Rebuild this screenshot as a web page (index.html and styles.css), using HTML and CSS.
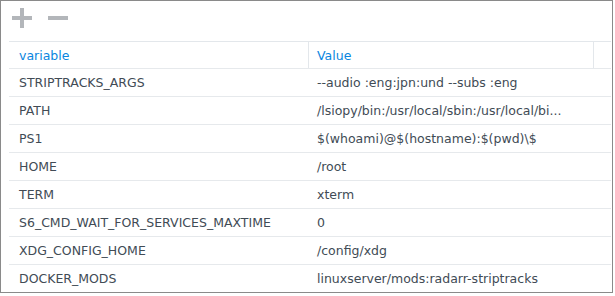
FILE: index.html
```html
<!DOCTYPE html>
<html lang="en">
<head>
    <meta charset="UTF-8">
    <title>Environment</title>
    <link rel="stylesheet" href="styles.css">
</head>
<body>
    <div class="panel">
        <div class="toolbar">
            <button class="tool-btn" title="Add">
                <svg width="20" height="20" viewBox="0 0 20 20"><rect x="8" y="0" width="4" height="20"/><rect x="0" y="8" width="20" height="4"/></svg>
            </button>
            <button class="tool-btn" title="Remove">
                <svg width="20" height="20" viewBox="0 0 20 20"><rect x="0" y="8" width="20" height="4"/></svg>
            </button>
        </div>
        <div class="grid">
            <div class="row head">
                <div class="cell key">variable</div>
                <div class="cell val">Value</div>
                <div class="cell gutter"></div>
            </div>
            <div class="row"><div class="cell key">STRIPTRACKS_ARGS</div><div class="cell val">--audio :eng:jpn:und --subs :eng</div></div>
            <div class="row"><div class="cell key">PATH</div><div class="cell val">/lsiopy/bin:/usr/local/sbin:/usr/local/bi...</div></div>
            <div class="row"><div class="cell key">PS1</div><div class="cell val">$(whoami)@$(hostname):$(pwd)\$</div></div>
            <div class="row"><div class="cell key">HOME</div><div class="cell val">/root</div></div>
            <div class="row"><div class="cell key">TERM</div><div class="cell val">xterm</div></div>
            <div class="row"><div class="cell key">S6_CMD_WAIT_FOR_SERVICES_MAXTIME</div><div class="cell val">0</div></div>
            <div class="row"><div class="cell key">XDG_CONFIG_HOME</div><div class="cell val">/config/xdg</div></div>
            <div class="row"><div class="cell key">DOCKER_MODS</div><div class="cell val">linuxserver/mods:radarr-striptracks</div></div>
        </div>
    </div>
</body>
</html>
```
FILE: styles.css
```css
body {
    margin: 0;
    background-color: #fff;
    font-family: "DejaVu Sans", Verdana, sans-serif;
    font-size: 12.5px;
    color: #414b55;
}

.panel {
    width: 613px;
    height: 293px;
    box-sizing: border-box;
    border: 1px solid #8a8a8a;
    padding: 0 1px 0 8px;
    overflow: hidden;
}

.toolbar {
    height: 40px;
    display: flex;
    align-items: flex-start;
    gap: 16px;
    padding: 7px 0 0 3px;
    box-sizing: border-box;
}

.tool-btn {
    border: none;
    background: none;
    padding: 0;
    width: 20px;
    height: 20px;
    cursor: pointer;
}

.tool-btn svg {
    display: block;
    fill: #b3b6ba;
}

.grid {
    border-top: 1px solid #e3e7eb;
}

.row {
    display: flex;
    height: 28px;
    box-sizing: border-box;
    border-bottom: 1px solid #e6e9ec;
    align-items: center;
}

.row.head {
    height: 27px;
    align-items: stretch;
    color: #0a86e0;
}

.cell {
    white-space: nowrap;
    overflow: hidden;
}

.key {
    width: 300px;
    padding-left: 10px;
    box-sizing: border-box;
}

.val {
    width: 284px;
    padding-left: 8px;
    box-sizing: border-box;
}

.head .cell {
    display: flex;
    align-items: center;
}

.head .key,
.head .val {
    border-right: 1px solid #e3e7eb;
}

.head .val {
    width: 285px;
}

.gutter {
    flex: 1;
}
```
